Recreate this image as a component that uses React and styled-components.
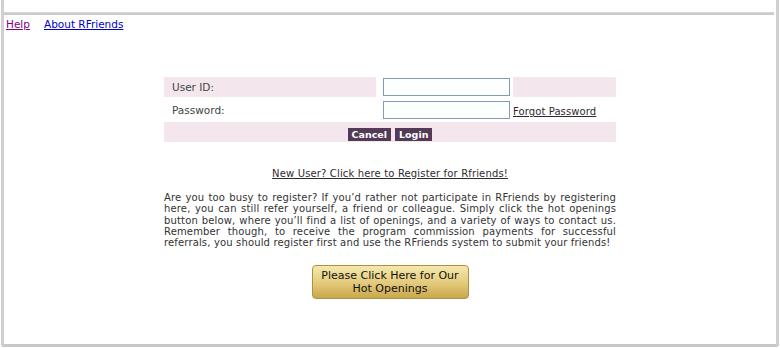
import React from "react";
import styled, { createGlobalStyle } from "styled-components";

const GlobalStyle = createGlobalStyle`
  html, body {
    margin: 0;
    padding: 0;
    background: #fff;
  }
  body {
    font-family: "DejaVu Sans", Verdana, sans-serif;
  }
`;

const Frame = styled.div`
  box-sizing: border-box;
  margin-left: 1px;
  width: 778px;
  height: 347px;
  padding-top: 12px;
  border-left: 3px solid #d0d0d0;
  border-right: 3px solid #d0d0d0;
  border-bottom: 3px solid #c8c8c8;
  border-radius: 0 0 3px 3px;
  background: #fff;
`;

const TopRule = styled.div`
  margin-right: 2px;
  height: 3px;
  background: linear-gradient(#d8d8d8, #c4c4c4);
`;

const TopNav = styled.nav`
  display: flex;
  gap: 14px;
  padding: 3px 0 0 2px;
  font-size: 10.5px;
`;

const NavLink = styled.a`
  color: ${({ visited }) => (visited ? "#800080" : "#0000cc")};
  text-decoration: underline;
`;

const Content = styled.div`
  width: 452px;
  margin: 47px auto 0;
`;

const LoginGrid = styled.div`
  display: grid;
  grid-template-columns: 212px 133px 103px;
  column-gap: 2px;
  row-gap: 2px;
  font-size: 10.5px;
  color: #444;
`;

const Cell = styled.div`
  background: ${({ tinted }) => (tinted ? "#f3e6ec" : "#fff")};
  height: ${({ h }) => h || 20}px;
  display: flex;
  align-items: center;
  padding-left: ${({ pad }) => pad || 0}px;
`;

const TextInput = styled.input`
  box-sizing: border-box;
  width: 127px;
  height: 18px;
  margin-left: 5px;
  border: 1px solid #7f9db9;
  background: #fdfefe;
  padding: 0 3px;
  outline: none;
`;

const DarkLink = styled.a`
  color: #2e2a30;
  font-size: ${({ size }) => size || 10}px;
  letter-spacing: ${({ spacing }) => spacing || 0.1}px;
  text-decoration: underline;
`;

const ForgotLink = styled(DarkLink)`
  margin-top: 4px;
`;

const ButtonRow = styled.div`
  grid-column: 1 / -1;
  background: #f3e6ec;
  height: 20px;
  box-sizing: border-box;
  padding-top: 6px;
  display: flex;
  justify-content: center;
  align-items: flex-start;
  gap: 4px;
`;

const SmallButton = styled.button`
  height: 13px;
  padding: 0 4px;
  border: none;
  background: #533b57;
  color: #fff;
  font-family: "DejaVu Sans", Verdana, sans-serif;
  font-weight: bold;
  font-size: 9.5px;
  line-height: 13px;
  cursor: pointer;
`;

const RegisterLine = styled.div`
  text-align: center;
  margin-top: 24px;
  line-height: 12px;
`;

const Blurb = styled.div`
  margin-top: 12px;
  font-size: 10px;
  letter-spacing: 0.15px;
  line-height: 11.3px;
  color: #333;
`;

const BlurbLine = styled.div`
  text-align: justify;
  text-align-last: ${({ last }) => (last ? "left" : "justify")};
  white-space: nowrap;
`;

const HotButton = styled.button`
  display: block;
  margin: 17px auto 0;
  width: 157px;
  height: 34px;
  border: 1px solid #ad9140;
  border-radius: 4px;
  background: linear-gradient(#f6e8ad, #e3c979 55%, #c9a74c);
  color: #111;
  font-family: "DejaVu Sans", Verdana, sans-serif;
  font-size: 11px;
  line-height: 13px;
  cursor: pointer;
`;

const lines = [
  "Are you too busy to register? If you\u2019d rather not participate in RFriends by registering",
  "here, you can still refer yourself, a friend or colleague. Simply click the hot openings",
  "button below, where you\u2019ll find a list of openings, and a variety of ways to contact us.",
  "Remember though, to receive the program commission payments for successful",
  "referrals, you should register first and use the RFriends system to submit your friends!",
];

export default function App() {
  return (
    <>
      <GlobalStyle />
      <Frame>
        <TopRule />
        <TopNav>
          <NavLink href="#" visited>Help</NavLink>
          <NavLink href="#">About RFriends</NavLink>
        </TopNav>
        <Content>
          <LoginGrid>
            <Cell tinted pad={8}>User ID:</Cell>
            <Cell>
              <TextInput type="text" />
            </Cell>
            <Cell tinted />
            <Cell pad={8} h={21}>Password:</Cell>
            <Cell h={21}>
              <TextInput type="password" />
            </Cell>
            <Cell h={21}>
              <ForgotLink href="#">Forgot Password</ForgotLink>
            </Cell>
            <ButtonRow>
              <SmallButton>Cancel</SmallButton>
              <SmallButton>Login</SmallButton>
            </ButtonRow>
          </LoginGrid>
          <RegisterLine>
            <DarkLink href="#" size={10} spacing={0.15}>
              New User? Click here to Register for Rfriends!
            </DarkLink>
          </RegisterLine>
          <Blurb>
            {lines.map((l, i) => (
              <BlurbLine key={i} last={i === lines.length - 1}>
                {l}
              </BlurbLine>
            ))}
          </Blurb>
          <HotButton>
            Please Click Here for Our
            <br />
            Hot Openings
          </HotButton>
        </Content>
      </Frame>
    </>
  );
}
